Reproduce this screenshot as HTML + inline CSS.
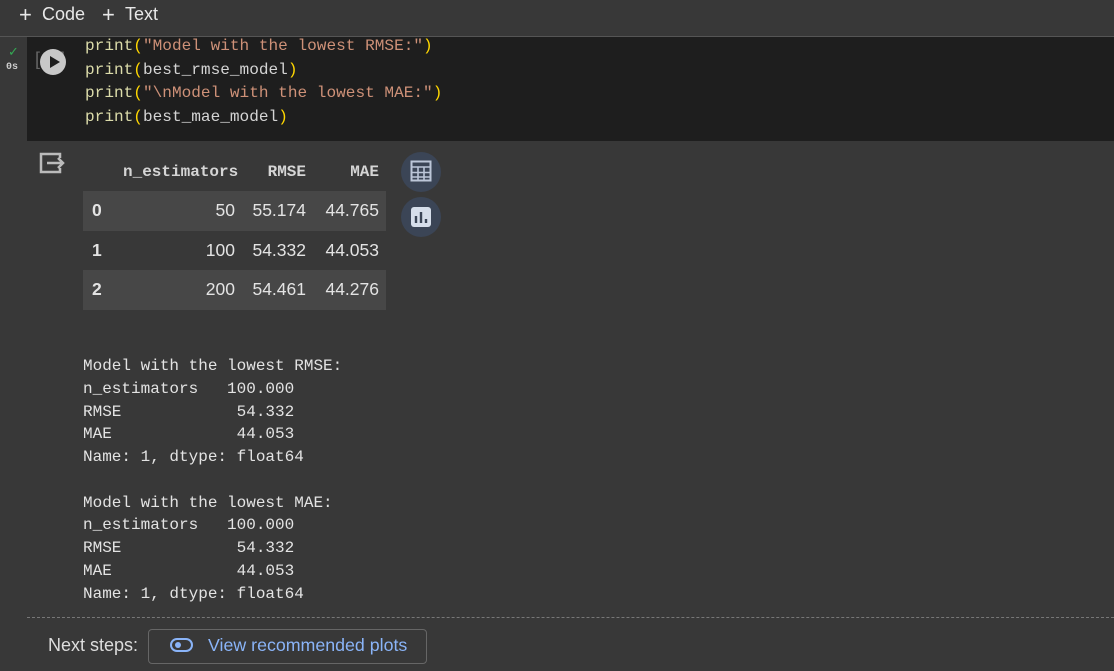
<!DOCTYPE html>
<html><head><style>
body{margin:0;width:1114px;height:671px;background:#383838;overflow:hidden;position:relative;font-family:"Liberation Sans",sans-serif;color:#e3e3e3}
.abs{position:absolute}
.mono{font-family:"Liberation Mono",monospace}
.code{left:85px;top:35px;font-size:16.1px;line-height:23.7px;white-space:pre;color:#d4d4d4}
.s{color:#ce9178}.p{color:#ffd700}.f{color:#dcdcaa}
.out{left:83px;font-size:16px;line-height:22.75px;white-space:pre;color:#e3e3e3}
table{border-collapse:collapse;font-size:17.5px;table-layout:fixed}
td,th{padding:0 7px 0 0;text-align:right}
th{font-family:"Liberation Mono",monospace;font-weight:bold;font-size:16px;color:#d5d5d5;height:39px}
td{height:39.5px}
tr.z td{background:#474747}
td:first-child{text-align:left;font-weight:bold;padding-left:9px}
.circ{width:40px;height:40px;border-radius:50%;background:#3b4556;left:401px}
</style></head><body>
<div class="abs" style="left:0;top:0;width:1114px;height:36px;border-bottom:1px solid #555;background:#383838"></div>
<div class="abs" style="left:19px;top:2px;font-size:22px;color:#e8e8e8">+</div>
<div class="abs" style="left:42px;top:4px;font-size:18px;color:#e8e8e8">Code</div>
<div class="abs" style="left:102px;top:2px;font-size:22px;color:#e8e8e8">+</div>
<div class="abs" style="left:125px;top:4px;font-size:18px;color:#e8e8e8">Text</div>
<div class="abs" style="left:27px;top:37px;width:1087px;height:104px;background:#1e1e1e"></div>
<div class="abs" style="left:8px;top:44px;color:#34a853;font-size:13px">✓</div>
<div class="abs mono" style="left:6px;top:62px;font-size:10px;font-weight:bold;color:#ccc">0s</div>
<div class="abs" style="left:35px;top:49px;color:#666;font-size:18px">[&nbsp;&nbsp;&nbsp;&nbsp;]</div>
<div class="abs" style="left:40px;top:49px;width:26px;height:26px;border-radius:50%;background:#c8c8c8"></div>
<div class="abs" style="left:50px;top:56px;width:0;height:0;border-left:10px solid #1e1e1e;border-top:6px solid transparent;border-bottom:6px solid transparent"></div>
<div class="abs mono code"><span class="f">print</span><span class="p">(</span><span class="s">"Model with the lowest RMSE:"</span><span class="p">)</span>
<span class="f">print</span><span class="p">(</span>best_rmse_model<span class="p">)</span>
<span class="f">print</span><span class="p">(</span><span class="s">"\nModel with the lowest MAE:"</span><span class="p">)</span>
<span class="f">print</span><span class="p">(</span>best_mae_model<span class="p">)</span></div>
<svg class="abs" style="left:38px;top:151px" width="28" height="24" viewBox="0 0 28 24"><path d="M13 3H3v18h19v-4M22 7V3h-9" fill="none" stroke="#bbb" stroke-width="2.5"/><path d="M9 12h16M20 7l5 5-5 5" fill="none" stroke="#bbb" stroke-width="2.5"/></svg>
<table class="abs" style="left:83px;top:152px;width:303px">
<colgroup><col style="width:40px"><col style="width:119px"><col style="width:71px"><col style="width:73px"></colgroup>
<tr><th></th><th>n_estimators</th><th>RMSE</th><th>MAE</th></tr>
<tr class="z"><td>0</td><td>50</td><td>55.174</td><td>44.765</td></tr>
<tr><td>1</td><td>100</td><td>54.332</td><td>44.053</td></tr>
<tr class="z"><td>2</td><td>200</td><td>54.461</td><td>44.276</td></tr>
</table>
<div class="abs circ" style="top:152px"></div>
<svg class="abs" style="left:410px;top:160px" width="22" height="22" viewBox="0 0 22 22"><rect x="1.5" y="1.5" width="19" height="19" fill="none" stroke="#bcc6d8" stroke-width="2"/><path d="M1.5 7h19M1.5 12.5h19M1.5 17h19M8 7v14M14 7v14" stroke="#bcc6d8" stroke-width="1.6"/></svg>
<div class="abs circ" style="top:197px"></div>
<svg class="abs" style="left:410px;top:206px" width="22" height="22" viewBox="0 0 22 22"><rect x="1" y="1" width="20" height="20" rx="3" fill="#d6deea"/><path d="M6 10v7M11 6v11M16 13v4" stroke="#3b4556" stroke-width="2.4"/></svg>
<div class="abs mono out" style="top:355px">Model with the lowest RMSE:
n_estimators   100.000
RMSE            54.332
MAE             44.053
Name: 1, dtype: float64

Model with the lowest MAE:
n_estimators   100.000
RMSE            54.332
MAE             44.053
Name: 1, dtype: float64</div>
<div class="abs" style="left:27px;top:617px;width:1087px;border-top:1px dashed #777"></div>
<div class="abs" style="left:48px;top:635px;font-size:18px;color:#ddd">Next steps:</div>
<div class="abs" style="left:148px;top:629px;width:277px;height:33px;border:1px solid #666;border-radius:4px"></div>
<div class="abs" style="left:170px;top:638px;width:23px;height:14px;border:2.5px solid #8ab4f8;border-radius:9px;box-sizing:border-box"></div>
<div class="abs" style="left:175px;top:642px;width:6px;height:6px;border-radius:50%;background:#8ab4f8"></div>
<div class="abs" style="left:208px;top:635px;font-size:17.8px;color:#8ab4f8">View recommended plots</div>
</body></html>
